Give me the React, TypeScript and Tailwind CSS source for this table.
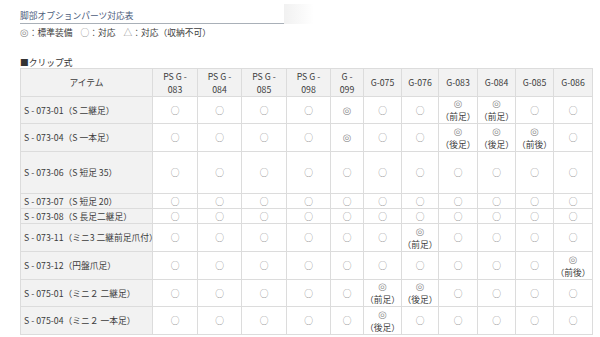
import React from "react";

// --- data ---

const COLUMNS: { label: string[]; width: string }[] = [
  { label: ["PS G -", "083"], width: "w-[45px]" },
  { label: ["PS G -", "084"], width: "w-[44px]" },
  { label: ["PS G -", "085"], width: "w-[45px]" },
  { label: ["PS G -", "098"], width: "w-[44px]" },
  { label: ["G -", "099"], width: "w-[33px]" },
  { label: ["G-075"], width: "w-[38px]" },
  { label: ["G-076"], width: "w-[37px]" },
  { label: ["G-083"], width: "w-[39px]" },
  { label: ["G-084"], width: "w-[38px]" },
  { label: ["G-085"], width: "w-[38px]" },
  { label: ["G-086"], width: "w-[39px]" },
];

type Cell = string | [string, string];

const O = "○";
const W = "◎";

const ROWS: { name: string; height: string; cells: Cell[] }[] = [
  {
    name: "S - 073-01（S 二継足）",
    height: "h-[27px]",
    cells: [O, O, O, O, W, O, O, [W, "（前足）"], [W, "（前足）"], O, O],
  },
  {
    name: "S - 073-04（S 一本足）",
    height: "h-[28px]",
    cells: [O, O, O, O, W, O, O, [W, "（後足）"], [W, "（後足）"], [W, "（前後）"], O],
  },
  {
    name: "S - 073-06（S 短足 35）",
    height: "h-[42px]",
    cells: [O, O, O, O, O, O, O, O, O, O, O],
  },
  {
    name: "S - 073-07（S 短足 20）",
    height: "h-[15px]",
    cells: [O, O, O, O, O, O, O, O, O, O, O],
  },
  {
    name: "S - 073-08（S 長足二継足）",
    height: "h-[15px]",
    cells: [O, O, O, O, O, O, O, O, O, O, O],
  },
  {
    name: "S - 073-11（ミニ3 二継前足爪付）",
    height: "h-[28px]",
    cells: [O, O, O, O, O, O, [W, "（前足）"], O, O, O, O],
  },
  {
    name: "S - 073-12（円盤爪足）",
    height: "h-[28px]",
    cells: [O, O, O, O, O, O, O, O, O, O, [W, "（前後）"]],
  },
  {
    name: "S - 075-01（ミニ２ 二継足）",
    height: "h-[27px]",
    cells: [O, O, O, O, O, [W, "（前足）"], [W, "（後足）"], O, O, O, O],
  },
  {
    name: "S - 075-04（ミニ２ 一本足）",
    height: "h-[28px]",
    cells: [O, O, O, O, O, [W, "（後足）"], O, O, O, O, O],
  },
];

function Mark({ value }: { value: string }) {
  // ◎ looks boxy in the CJK font at this size, DejaVu draws it round
  if (value === W)
    return (
      <span className="font-['DejaVu_Sans',sans-serif] text-[10px] leading-[13px] text-[#909090]">
        {value}
      </span>
    );
  return <span className="text-[#8a8a8a]">{value}</span>;
}

export default function App() {
  return (
    <div className="h-[337px] w-[600px] overflow-hidden bg-white pl-[20px] font-['Noto_Sans_CJK_JP','Noto_Sans',sans-serif] text-[8.75px] leading-[13px] text-[#3c3c3c]">
      {/* Title */}
      <div className="flex items-end pt-[4px]">
        <div className="w-[264px] border-b border-[#a9b0b8] pb-[1px] text-[#4d5d7c]">
          脚部オプションパーツ対応表
        </div>
        <div className="h-[20px] w-[30px] bg-gradient-to-r from-[#f1f1f1] to-white" />
      </div>

      {/* Legend */}
      <div className="mt-[2px] flex h-[13px] items-center gap-[8px]">
        <span>
          <Mark value={W} />：標準装備
        </span>
        <span>
          <Mark value={O} />：対応
        </span>
        <span>
          <Mark value="△" />：対応（収納不可）
        </span>
      </div>

      <div className="mt-[17px] text-[#333]">■クリップ式</div>

      {/* Table */}
      <table className="mt-[-1px] w-[572px] table-fixed border-collapse">
        <colgroup>
          <col className="w-[132px]" />
          {COLUMNS.map((c, i) => (
            <col key={i} className={c.width} />
          ))}
        </colgroup>
        <thead>
          <tr className="h-[28px] bg-[#f2f2f2]">
            <th className="border border-[#dcdcdc] p-0 text-center font-normal">
              アイテム
            </th>
            {COLUMNS.map((c, i) => (
              <th
                key={i}
                className="border border-[#dcdcdc] p-0 text-center font-normal"
              >
                {c.label.map((l) => (
                  <div key={l}>{l}</div>
                ))}
              </th>
            ))}
          </tr>
        </thead>
        <tbody>
          {ROWS.map((row) => (
            <tr key={row.name} className={row.height}>
              <td className="border border-[#dcdcdc] bg-[#f2f2f2] p-0 pl-[3px] text-left whitespace-nowrap">
                {row.name}
              </td>
              {row.cells.map((cell, i) => (
                <td
                  key={i}
                  className="border border-[#dcdcdc] p-0 text-center whitespace-nowrap"
                >
                  {typeof cell === "string" ? (
                    <Mark value={cell} />
                  ) : (
                    <>
                      <div className="h-[13px]">
                        <Mark value={cell[0]} />
                      </div>
                      <div>{cell[1]}</div>
                    </>
                  )}
                </td>
              ))}
            </tr>
          ))}
        </tbody>
      </table>
    </div>
  );
}
